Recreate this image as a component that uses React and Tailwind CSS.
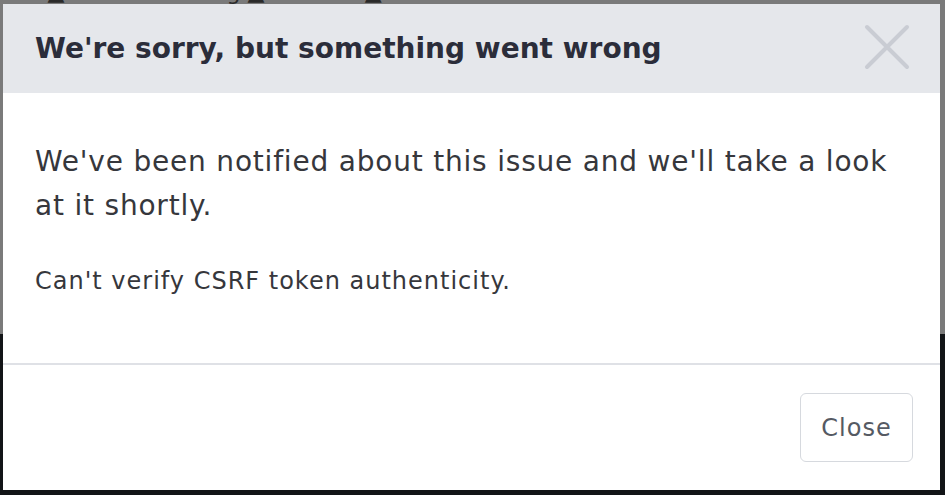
import React from 'react';

const font = { fontFamily: '"DejaVu Sans", Inter, sans-serif' };

const CloseIcon = () => (
  <svg viewBox="0 0 46 46" className="w-[46px] h-[46px]" fill="none" stroke="#c9ccd3" strokeWidth="4" strokeLinecap="round">
    <path d="M3 3 L43 43 M43 3 L3 43" />
  </svg>
);

const Backdrop = () => (
  <div className="h-full bg-[linear-gradient(to_bottom,#7a7a7a_0,#7a7a7a_334px,#121417_334px)]">
    <div className="flex items-end h-[4px] overflow-hidden text-[#2a2a2a] text-[22px] leading-none gap-6 pl-0">
      <span className="-ml-3">Date ▲</span>
      <span className="ml-16">Pending ▲</span>
      <span className="ml-6">Lost ▲</span>
    </div>
  </div>
);

export default function App() {
  return (
    <div className="relative w-[945px] h-[495px] overflow-hidden" style={font}>
      <Backdrop />
      <div className="absolute left-[3px] top-[4px] right-[5px] bottom-[5px] bg-white flex flex-col">
        <div className="h-[89px] bg-[#e5e7eb] flex items-center justify-between pl-[32px] pr-[30px]">
          <h2 className="text-[28px] leading-[42px] font-bold text-[#2b2d3a]">We're sorry, but something went wrong</h2>
          <button className="mb-[4px]">
            <CloseIcon />
          </button>
        </div>
        <div className="flex-1 px-[32px] pt-[47px]">
          <p className="text-[28px] leading-[44px] tracking-[0.8px] text-[#36373c]">
            We've been notified about this issue and we'll take a look at it shortly.
          </p>
          <p className="mt-[35px] text-[24px] leading-[36px] tracking-[1px] text-[#36373c]">Can't verify CSRF token authenticity.</p>
        </div>
        <div className="h-[127px] border-t-2 border-[#dfe1e6] flex items-center justify-end pr-[27px]">
          <button className="w-[113px] h-[69px] border border-[#d6d9de] rounded-[6px] text-[24px] tracking-[1px] text-[#555a63]">
            Close
          </button>
        </div>
      </div>
    </div>
  );
}
